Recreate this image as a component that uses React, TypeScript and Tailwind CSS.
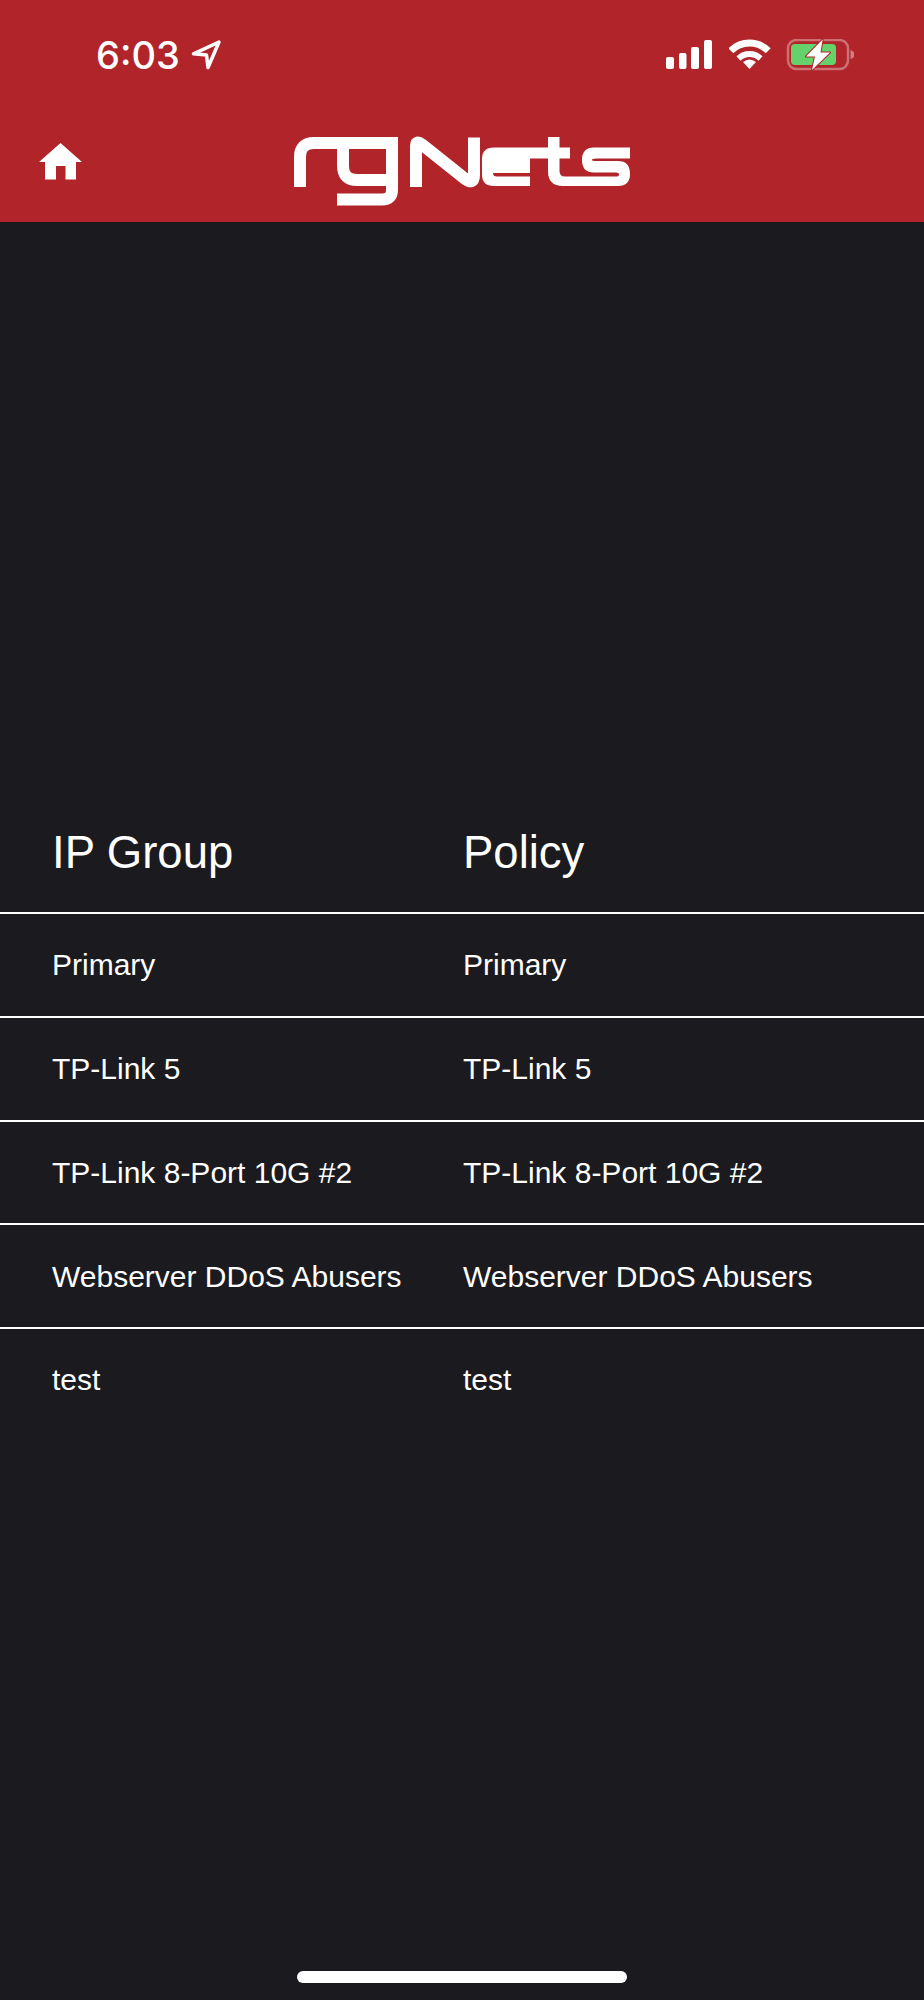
const rows = [
  "Primary",
  "TP-Link 5",
  "TP-Link 8-Port 10G #2",
  "Webserver DDoS Abusers",
  "test",
];

const StatusIcons = () => {
  return (
    <div className="flex items-start">
      <svg width="46" height="29" viewBox="666 40 46 29" className="mt-px">
        <rect x="666" y="57" width="8" height="12" rx="2" fill="#fff" />
        <rect x="679" y="53" width="7.5" height="16" rx="2" fill="#fff" />
        <rect x="691" y="47" width="8" height="22" rx="2" fill="#fff" />
        <rect x="704" y="40" width="8" height="29" rx="2" fill="#fff" />
      </svg>
      <svg width="42" height="30" viewBox="729 39.5 42 30" className="ml-[17px]">
        <g fill="none" stroke="#fff">
          <path d="M730.8 51.3 A26.5 26.5 0 0 1 768.2 51.3" strokeWidth="7" />
          <path d="M738.5 59 A16 16 0 0 1 760.5 59" strokeWidth="6" />
        </g>
        <path d="M743 62.5 Q749.5 57.5 756 62.5 L749.5 69.5 Z" fill="#fff" />
      </svg>
      <svg width="68" height="32" viewBox="786 39 68 32" className="ml-[15px]">
        <rect x="788" y="40" width="60" height="29" rx="8.5" fill="none" stroke="#fff" strokeOpacity="0.35" strokeWidth="2.5" />
        <path d="M850.5 50 Q854.5 51 854.5 54.5 Q854.5 58 850.5 59 Z" fill="#fff" fillOpacity="0.4" />
        <rect x="791" y="44" width="45" height="21" rx="4" fill="#65d16b" />
        <path
          d="M822.6 39.5 L806 56.5 H815 L812 70 L830 52.5 H820.5 Z"
          fill="#fff"
          stroke="#b1242a"
          strokeWidth="2"
          paintOrder="stroke"
          strokeLinejoin="round"
        />
      </svg>
    </div>
  );
};

const Logo = () => {
  return (
    <svg width="338" height="70" viewBox="293 136 338 70">
      <g fill="none" stroke="#fff" strokeWidth="12">
        <path d="M300 187 V157 Q300 143 314 143 H392 V190 Q392 199.5 382 199.5 H337" />
        <path d="M343 149 V166 Q343 180 357 180 H386" />
        <path d="M416 187 V146 Q416 140 422 144.5 L464 178 Q474 186 474 175 V137.5" strokeLinejoin="round" />
      </g>
      <path
        d="M548 147.5 H494 Q482 147.5 482 159 V174.5 Q482 186 494 186 H530 V176.5 H497 Q493 176.5 493 173 H530 V158.5 H548 Z"
        fill="#fff"
      />
      <path
        d="M548 137 H559.5 V147.5 H570 V158.5 H559.5 V171 Q559.5 176.5 565 176.5 H616 Q619 176.5 619 174.5 Q619 172.5 616 172.5 H594 Q582 172.5 582 160 Q582 147.5 594 147.5 H630 V158.5 H596 Q592 158.5 592 160 Q592 161 596 161 H618 Q630 161 630 174 Q630 186 618 186 H563 Q548 186 548 171 Z"
        fill="#fff"
      />
    </svg>
  );
};

export default function App() {
  return (
    <div className="flex min-h-[2000px] w-full flex-col bg-[#1a1a1f] font-['Liberation_Sans',Arial,sans-serif] text-white">
      <header className="h-[222px] bg-[#b1242a]">
        <div className="flex h-[71px] items-start justify-between pl-[96px] pr-[70px] pt-[39px]">
          <div className="flex items-center">
            <span className="font-['Inter',sans-serif] text-[38px] font-medium leading-[32px]">
              6:03
            </span>
            <svg width="32" height="32" viewBox="190 40 32 32" className="ml-[11px]">
              <path
                d="M218 43 L192.5 54.8 L205.5 56 L207 68.5 Z"
                fill="none"
                stroke="#fff"
                strokeWidth="3.5"
                strokeLinejoin="round"
              />
            </svg>
          </div>
          <StatusIcons />
        </div>
        <nav className="mt-[65px] flex items-start pl-[39px]">
          <svg width="43" height="37" viewBox="39 143 43 37" className="mt-[7px]">
            <path
              d="M60.5 143 L82 162 H76 V179.5 H65.5 V166 H56 V179.5 H45 V162 H39 Z"
              fill="#fff"
            />
          </svg>
          <div className="ml-[211px]">
            <Logo />
          </div>
        </nav>
      </header>
      <main className="flex flex-1 flex-col pt-[572px]">
        <div className="grid h-[120px] grid-cols-2 items-center border-b-2 border-white text-[45.5px]">
          <div className="pl-[52px]">IP Group</div>
          <div className="pl-px">Policy</div>
        </div>
        {rows.map((row, i) => (
          <div
            key={row}
            className={
              i < rows.length - 1
                ? "grid h-[103.75px] grid-cols-2 items-center border-b-2 border-white text-[30px]"
                : "grid h-[103.75px] grid-cols-2 items-center border-b-2 border-transparent text-[30px]"
            }
          >
            <div className="pl-[52px]">{row}</div>
            <div className="pl-px">{row}</div>
          </div>
        ))}
        <div className="mt-auto flex justify-center pb-[17px]">
          <div className="h-[12px] w-[330px] rounded-full bg-white" />
        </div>
      </main>
    </div>
  );
}
